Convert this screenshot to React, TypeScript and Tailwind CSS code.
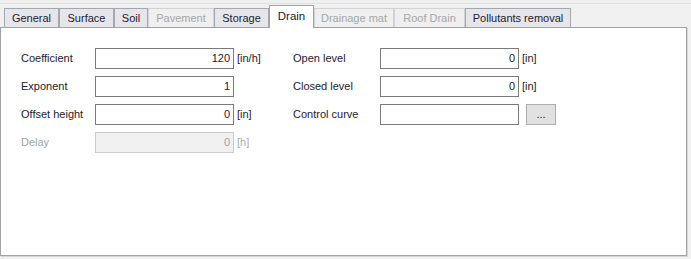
import React from 'react'

type Tab = { name: string; width: string; disabled?: boolean; selected?: boolean }

const tabs: Tab[] = [
  { name: 'General', width: 'w-[55px]' },
  { name: 'Surface', width: 'w-[55px]' },
  { name: 'Soil', width: 'w-[34px]' },
  { name: 'Pavement', width: 'w-[66px]', disabled: true },
  { name: 'Storage', width: 'w-[55px]' },
  { name: 'Drain', width: 'w-[45px]', selected: true },
  { name: 'Drainage mat', width: 'w-[80px]', disabled: true },
  { name: 'Roof Drain', width: 'w-[71px]', disabled: true },
  { name: 'Pollutants removal', width: 'w-[106px]' },
]

function Field({
  label,
  value,
  unit,
  disabled,
  labelWidth,
}: {
  label: string
  value: string
  unit?: string
  disabled?: boolean
  labelWidth: string
}) {
  return (
    <div className="flex items-center h-[21px]">
      <div className={`${labelWidth} ${disabled ? 'text-[#a2a2a2]' : 'text-[#1f2030]'}`}>{label}</div>
      <div
        className={`w-[139px] h-[21px] border flex items-center justify-end pr-[3px] ${
          disabled ? 'bg-[#f0f0f0] border-[#cccccc] text-[#a2a2a2]' : 'bg-white border-[#7a7a7a] text-[#1f2030]'
        }`}
      >
        {value}
      </div>
      {unit && (
        <div className={`ml-[3px] ${disabled ? 'text-[#a3a9c0]' : 'text-[#1f2030]'}`}>{unit}</div>
      )}
    </div>
  )
}

export default function App() {
  return (
    <div className="w-[691px] h-[259px] bg-[#f0f0f0] font-['Liberation_Sans',Arial,sans-serif] text-[11px] pt-[3px]">
      {/* Tab strip */}
      <div className="border-t border-[#e2e2e2] h-[24px] flex items-end pl-[4px] relative z-10">
        {tabs.map((tab) => {
          if (tab.selected) {
            return (
              <div
                key={tab.name}
                className={`${tab.width} h-[23px] -mb-px bg-white border border-b-0 border-[#a0a2ac] flex items-center justify-center text-[#1f2030] text-[11.5px]`}
              >
                {tab.name}
              </div>
            )
          }
          return (
            <div
              key={tab.name}
              className={`${tab.width} h-[19px] border border-b-0 flex items-center justify-center ${
                tab.disabled
                  ? 'bg-[#efeff0] border-[#d2d2d6] text-[#a6a6a6]'
                  : 'bg-[#e6e6ea] border-[#a4a6b0] text-[#1f2030]'
              }`}
            >
              {tab.name}
            </div>
          )
        })}
      </div>

      {/* Panel */}
      <div className="w-[687px] h-[229px] bg-white border border-[#a0a3ae] shadow-[1px_1px_0_#d6d6da] pt-[20px] pl-[20px] flex">
        <div className="w-[272px] flex flex-col gap-[7px]">
          <Field label="Coefficient" value="120" unit="[in/h]" labelWidth="w-[74px]" />
          <Field label="Exponent" value="1" labelWidth="w-[74px]" />
          <Field label="Offset height" value="0" unit="[in]" labelWidth="w-[74px]" />
          <Field label="Delay" value="0" unit="[h]" labelWidth="w-[74px]" disabled />
        </div>
        <div className="flex flex-col gap-[7px]">
          <Field label="Open level" value="0" unit="[in]" labelWidth="w-[87px]" />
          <Field label="Closed level" value="0" unit="[in]" labelWidth="w-[87px]" />
          <div className="flex items-center h-[21px]">
            <div className="w-[87px] text-[#1f2030]">Control curve</div>
            <div className="w-[139px] h-[21px] border border-[#7a7a7a] bg-white" />
            <button className="ml-[7px] w-[30px] h-[21px] bg-[#e1e1e1] border border-[#adadad] text-[#1f2030] flex items-center justify-center leading-none">
              ...
            </button>
          </div>
        </div>
      </div>
    </div>
  )
}
